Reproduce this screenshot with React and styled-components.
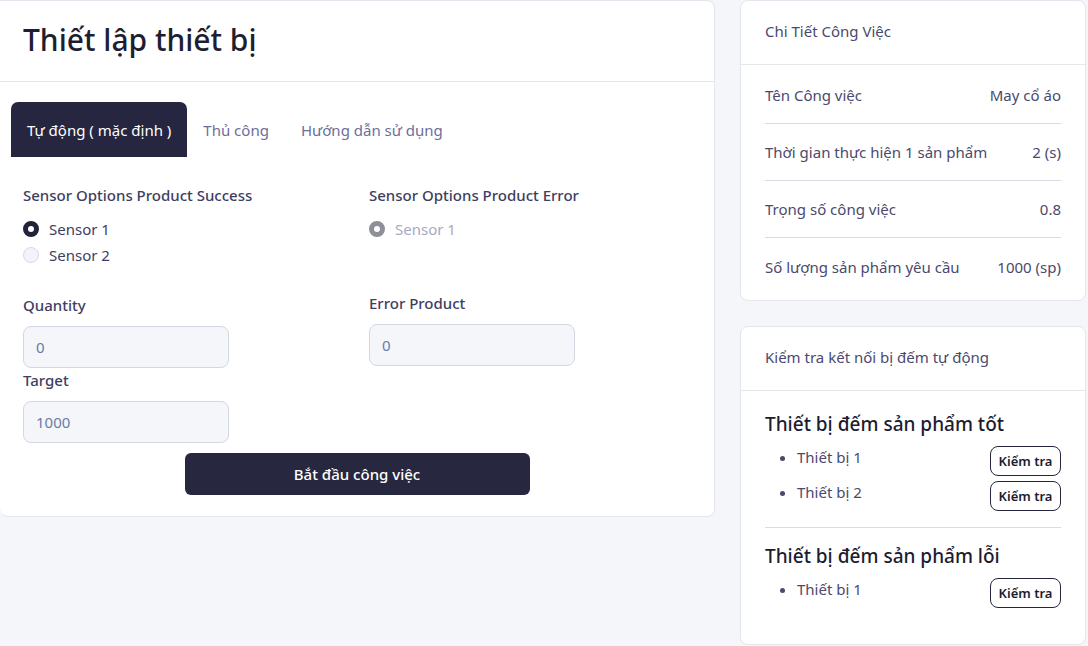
import React from "react";
import styled, { createGlobalStyle } from "styled-components";

const GlobalStyle = createGlobalStyle`
  body {
    margin: 0;
    background: #f4f6f9;
    font-family: "Noto Sans", Lato, sans-serif;
    color: #4a4a6a;
  }
  * {
    box-sizing: border-box;
  }
`;

const Page = styled.div`
  display: grid;
  grid-template-columns: 715px 346px;
  column-gap: 25px;
  align-items: start;
  height: 646px;
  overflow: hidden;
`;

const Card = styled.div`
  background: white;
  border: 1px solid #e3e6ec;
  border-radius: 8px;
  overflow: hidden;
`;

const LeftCard = styled(Card)`
  border-top-left-radius: 0;
  border-left: none;
`;

const TitleBar = styled.div`
  height: 81px;
  padding: 0 23px 4px;
  display: flex;
  align-items: center;
  border-bottom: 1px solid #e5e7eb;
`;

const Title = styled.h1`
  margin: 0;
  font-size: 30px;
  font-weight: 500;
  color: #1e1e33;
`;

const Tabs = styled.div`
  display: flex;
  padding: 20px 11px 0;
`;

const Tab = styled.div`
  height: 55px;
  padding: 0 16px;
  display: flex;
  align-items: center;
  font-size: 15px;
  border-radius: 7px 7px 0 0;
  color: ${(props) => (props.active ? "#ffffff" : "#6c6f9c")};
  background: ${(props) => (props.active ? "#262640" : "transparent")};
`;

const Columns = styled.div`
  display: grid;
  grid-template-columns: 346px 1fr;
  padding: 27px 23px 0;
`;

const Column = styled.div`
  display: flex;
  flex-direction: column;
`;

const Label = styled.div`
  font-size: 15px;
  line-height: 22px;
  font-weight: 500;
  color: #3e3e60;
  margin-top: ${(props) => props.top || 0}px;
`;

const RadioGroup = styled.div`
  margin-top: 10px;
  display: flex;
  flex-direction: column;
`;

const RadioRow = styled.label`
  height: 26px;
  display: flex;
  align-items: center;
  gap: 10px;
  font-size: 15px;
  color: ${(props) => (props.disabled ? "#a9a9be" : "#3e3e60")};
`;

const RadioDot = styled.span`
  width: 16px;
  height: 16px;
  border-radius: 50%;
  flex-shrink: 0;
  background: ${(props) => (props.checked ? "#ffffff" : "#f1f4f8")};
  border: ${(props) =>
    props.checked
      ? `5px solid ${props.disabled ? "#8f8f9a" : "#22223a"}`
      : "1px solid #d5d9e2"};
`;

const Input = styled.div`
  margin-top: 10px;
  width: 206px;
  height: 42px;
  border: 1px solid #d3d7e2;
  border-radius: 8px;
  background: #f4f6fa;
  padding: 0 12px;
  display: flex;
  align-items: center;
  font-size: 15px;
  color: #6b7ba8;
`;

const ButtonRow = styled.div`
  display: flex;
  justify-content: center;
  padding: 10px 0 21px;
`;

const StartButton = styled.button`
  width: 345px;
  height: 42px;
  border: none;
  border-radius: 6px;
  background: #272740;
  color: white;
  font-family: inherit;
  font-size: 15px;
  font-weight: 500;
`;

const Side = styled.div`
  display: flex;
  flex-direction: column;
  gap: 25px;
`;

const CardHeader = styled.div`
  height: 64px;
  padding: 0 24px 3px;
  display: flex;
  align-items: center;
  font-size: 15px;
  color: #4a4a6e;
  border-bottom: 1px solid #e5e7eb;
`;

const DetailBody = styled.div`
  padding: 2px 24px 5px;
`;

const DetailRow = styled.div`
  height: 57px;
  display: flex;
  align-items: center;
  justify-content: space-between;
  font-size: 15px;
  color: #4a4a6e;
  border-bottom: ${(props) => (props.last ? "none" : "1px solid #d9dbe3")};
`;

const CheckBody = styled.div`
  padding: 20px 24px 36px;
  min-height: 253px;
`;

const Group = styled.div`
  border-bottom: ${(props) => (props.last ? "none" : "1px solid #d9dbe3")};
  padding-bottom: ${(props) => (props.last ? 0 : 16)}px;
  margin-bottom: ${(props) => (props.last ? 0 : 15)}px;
`;

const GroupTitle = styled.h3`
  margin: 0;
  font-size: 19px;
  line-height: 26px;
  font-weight: 500;
  color: #1c1c30;
`;

const DeviceList = styled.ul`
  margin: 9px 0 0;
  padding-left: 32px;
  display: flex;
  flex-direction: column;
  gap: 5px;
  color: #4a4a6e;
`;

const DeviceItem = styled.li`
  font-size: 15px;
  line-height: 22px;
  height: 30px;
  position: relative;
`;

const CheckButton = styled.button`
  position: absolute;
  right: 0;
  top: 0;
  width: 71px;
  height: 30px;
  background: white;
  border: 1px solid #262640;
  border-radius: 8px;
  font-family: inherit;
  font-size: 13px;
  font-weight: 600;
  color: #1c1c30;
  padding: 0;
`;

const details = [
  ["Tên Công việc", "May cổ áo"],
  ["Thời gian thực hiện 1 sản phẩm", "2 (s)"],
  ["Trọng số công việc", "0.8"],
  ["Số lượng sản phẩm yêu cầu", "1000 (sp)"],
];

const groups = [
  { title: "Thiết bị đếm sản phẩm tốt", devices: ["Thiết bị 1", "Thiết bị 2"] },
  { title: "Thiết bị đếm sản phẩm lỗi", devices: ["Thiết bị 1"] },
];

const App = () => {
  return (
    <>
      <GlobalStyle />
      <Page>
        <LeftCard>
          <TitleBar>
            <Title>Thiết lập thiết bị</Title>
          </TitleBar>
          <Tabs>
            <Tab active>Tự động ( mặc định )</Tab>
            <Tab>Thủ công</Tab>
            <Tab>Hướng dẫn sử dụng</Tab>
          </Tabs>
          <Columns>
            <Column>
              <Label>Sensor Options Product Success</Label>
              <RadioGroup>
                <RadioRow>
                  <RadioDot checked />
                  Sensor 1
                </RadioRow>
                <RadioRow>
                  <RadioDot />
                  Sensor 2
                </RadioRow>
              </RadioGroup>
              <Label top={26}>Quantity</Label>
              <Input>0</Input>
              <Label top={1}>Target</Label>
              <Input>1000</Input>
            </Column>
            <Column>
              <Label>Sensor Options Product Error</Label>
              <RadioGroup>
                <RadioRow disabled>
                  <RadioDot checked disabled />
                  Sensor 1
                </RadioRow>
              </RadioGroup>
              <Label top={50}>Error Product</Label>
              <Input>0</Input>
            </Column>
          </Columns>
          <ButtonRow>
            <StartButton>Bắt đầu công việc</StartButton>
          </ButtonRow>
        </LeftCard>

        <Side>
          <Card>
            <CardHeader>Chi Tiết Công Việc</CardHeader>
            <DetailBody>
              {details.map(([label, value], i) => (
                <DetailRow key={label} last={i === details.length - 1}>
                  <span>{label}</span>
                  <span>{value}</span>
                </DetailRow>
              ))}
            </DetailBody>
          </Card>
          <Card>
            <CardHeader>Kiểm tra kết nối bị đếm tự động</CardHeader>
            <CheckBody>
              {groups.map((group, i) => (
                <Group key={group.title} last={i === groups.length - 1}>
                  <GroupTitle>{group.title}</GroupTitle>
                  <DeviceList>
                    {group.devices.map((device) => (
                      <DeviceItem key={device}>
                        {device}
                        <CheckButton>Kiểm tra</CheckButton>
                      </DeviceItem>
                    ))}
                  </DeviceList>
                </Group>
              ))}
            </CheckBody>
          </Card>
        </Side>
      </Page>
    </>
  );
};

export default App;
